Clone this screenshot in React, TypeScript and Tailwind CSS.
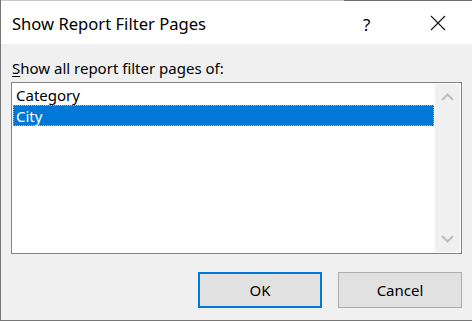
import React from "react";

const font = { fontFamily: '"Noto Sans", "Open Sans", sans-serif' };

export default function App() {
  return (
    <div
      className="relative w-[472px] h-[321px] bg-[#f0f0f0] border-l border-b border-[#777777] flex flex-col overflow-hidden text-black"
      style={font}
    >
      <div className="absolute left-0 top-0 w-[343px] h-px bg-[#c8c8c8]" />
      <div className="absolute right-0 top-0 left-[343px] h-px bg-[#6e6e6e]" />
      {/* Title bar */}
      <div className="h-[44px] bg-white flex items-center shrink-0">
        <div className="pl-[11px] text-[16.6px] leading-none pt-[5px]">Show Report Filter Pages</div>
        <div className="ml-auto w-[12px] text-[17px] leading-none pt-[5px] mr-[55px]">?</div>
        <svg width="16" height="16" viewBox="0 0 16 16" className="mr-[26px] mt-[1px]">
          <path d="M1 1 L15 15 M15 1 L1 15" stroke="#111" strokeWidth="1.1" fill="none" />
        </svg>
      </div>
      {/* Body */}
      <div className="flex flex-col pl-[10px] pr-[10px]">
        <div className="h-[38px] pt-[14px] pl-[1px] text-[15px] leading-[20px]">
          <span className="underline underline-offset-[2px] decoration-1">S</span>how all report filter pages of:
        </div>
        <div className="w-[451px] h-[172px] border border-[#828282] bg-white p-px flex">
          <div className="flex-1 flex flex-col pr-px">
            <div className="h-[21px] pl-[3px] text-[15px] leading-[22px]">Category</div>
            <div className="h-[21px] pl-[2px] text-[15px] leading-[20px] bg-[#0078d7] text-white border border-dotted border-[#f0a050]">City</div>
          </div>
          <div className="w-[25px] bg-[#f0f0f0] flex flex-col items-center justify-between py-[9px]">
            <svg width="13" height="8" viewBox="0 0 13 8">
              <path d="M1 7 L6.5 1.5 L12 7" stroke="#c0c0c0" strokeWidth="2.2" fill="none" />
            </svg>
            <svg width="13" height="8" viewBox="0 0 13 8">
              <path d="M1 1 L6.5 6.5 L12 1" stroke="#c0c0c0" strokeWidth="2.2" fill="none" />
            </svg>
          </div>
        </div>
        <div className="mt-[18px] flex justify-end gap-[16px]">
          <button className="w-[124px] h-[36px] bg-[#e1e1e1] border-2 border-[#0078d7] text-[15px] leading-none">OK</button>
          <button className="w-[124px] h-[36px] bg-[#e1e1e1] border border-[#adadad] text-[15px] leading-none">Cancel</button>
        </div>
      </div>
    </div>
  );
}
